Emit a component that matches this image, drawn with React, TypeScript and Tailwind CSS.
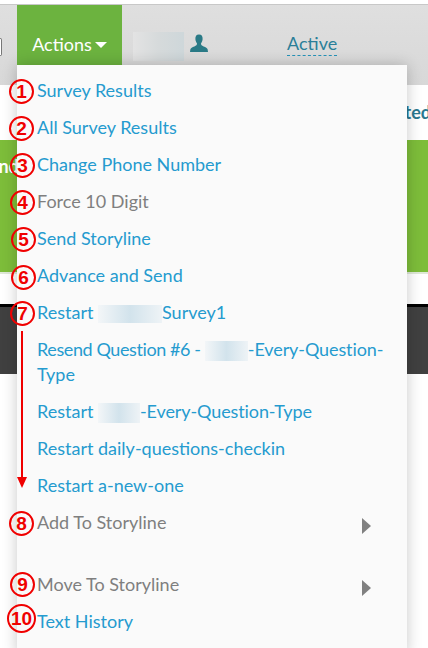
const link = "text-[#259bcf]";
const muted = "text-[#7f7f7f]";

function Blur({ className }: { className: string }) {
  return <span className={`inline-block bg-gradient-to-r from-[#f3f6f8] via-[#d2e3ec] to-[#eef3f6] ${className}`} />;
}

function Caret() {
  return (
    <svg width="9" height="16" viewBox="0 0 9 16" className="fill-[#808080]">
      <path d="M0 0L9 8L0 16Z" />
    </svg>
  );
}

const badges = [
  { n: "1", cls: "left-[9px] top-[79px] w-[25px] h-[25px]" },
  { n: "2", cls: "left-[9px] top-[116px] w-[25px] h-[25px]" },
  { n: "3", cls: "left-[10px] top-[153px] w-[25px] h-[25px]" },
  { n: "4", cls: "left-[10px] top-[190px] w-[25px] h-[25px]" },
  { n: "5", cls: "left-[11px] top-[227px] w-[25px] h-[25px]" },
  { n: "6", cls: "left-[11px] top-[265px] w-[25px] h-[25px]" },
  { n: "7", cls: "left-[10px] top-[301px] w-[25px] h-[25px]" },
  { n: "8", cls: "left-[9px] top-[511px] w-[25px] h-[25px]" },
  { n: "9", cls: "left-[10px] top-[572px] w-[25px] h-[25px]" },
  { n: "10", cls: "left-[7px] top-[604px] w-[29px] h-[29px]" },
];

export default function App() {
  return (
    <div className="relative h-[648px] w-[428px] overflow-hidden bg-white font-['Lato','Open_Sans',sans-serif] text-[18px]">
      <div className="h-1 bg-white" />
      <div className="h-px bg-[#c8c8c8]" />

      {/* top bar */}
      <div className="relative flex h-[80px] items-start bg-gradient-to-b from-[#dfdfdf] to-[#d8d8d8]">
        <div className="mt-[33px] h-[18px] w-[2px] rounded-r-sm border border-l-0 border-[#777] bg-white" />
        <div className="ml-[15px] flex h-[60px] w-[105px] items-center justify-center gap-[3px] bg-[#6cb33f] pt-[18px] text-white">
          <span>Actions</span>
          <span className="mt-[2px] h-0 w-0 border-x-[6px] border-t-[6px] border-x-transparent border-t-white" />
        </div>
        <span className="ml-[11px] mt-[27px] inline-block h-[29px] w-[51px] bg-gradient-to-r from-[#e3e3e3] via-[#d6dadb] to-[#ced7da]" />
        <svg width="18" height="19" viewBox="0 0 19 19" className="ml-[6px] mt-[29px] fill-[#2a7a86]">
          <path d="M9.5 0C12.4 0 13.6 2.2 13.3 5C13.1 7.2 12.2 8.6 11.6 9.6C11.6 11 12.4 11.8 14.4 12.6C16.6 13.5 18.2 14.2 18.6 15.6L19 18.6H0L.4 15.6C.8 14.2 2.4 13.5 4.6 12.6C6.6 11.8 7.4 11 7.4 9.6C6.8 8.6 5.9 7.2 5.7 5C5.4 2.2 6.6 0 9.5 0Z" />
        </svg>
        <span className="ml-[79px] mt-[27px] border-b border-dashed border-[#2592b8] leading-[23px] text-[#2b7f98]">Active</span>
      </div>

      {/* page behind the menu */}
      <div className="flex h-[55px] items-center justify-end overflow-hidden whitespace-nowrap font-bold text-[#2b7890]">
        <span className="-mr-[3px]">Updated</span>
      </div>
      <div className="flex h-[132px] justify-between overflow-hidden bg-[#7dbd3a] pt-[13px] text-white">
        <span className="-ml-[21px] font-bold">Send</span>
      </div>
      <div className="h-[2px] bg-[#dfe8d8]" />
      <div className="h-[30px] bg-white" />
      <div className="h-[3px] bg-black" />
      <div className="h-[67px] bg-[#404040]" />

      {/* actions dropdown */}
      <div className="absolute left-[17px] top-[65px] h-[590px] w-[390px] bg-[#fafafa] pl-5 pr-5 pt-[6.5px] leading-[25px] shadow-[0_0_14px_rgba(0,0,0,0.22)]">
        <div className={`py-[6px] ${link}`}>Survey Results</div>
        <div className={`py-[6px] ${link}`}>All Survey Results</div>
        <div className={`py-[6px] ${link}`}>Change Phone Number</div>
        <div className={`py-[6px] ${muted}`}>Force 10 Digit</div>
        <div className={`py-[6px] ${link}`}>Send Storyline</div>
        <div className={`py-[6px] ${link}`}>Advance and Send</div>
        <div className={`py-[6px] ${link}`}>
          Restart <Blur className="h-[18px] w-[64px] align-[-4px]" />Survey1
        </div>
        <div className={`py-[6px] ${link}`}>
          <span className="tracking-[-0.4px]">Resend Question #6 - </span>
          <Blur className="h-5 w-[43px] align-[-5px]" />
          <span className="tracking-[-0.1px]">-Every-Question-</span>
          <br />
          Type
        </div>
        <div className={`py-[6px] ${link}`}>
          Restart <Blur className="h-5 w-[42px] align-[-5px]" />
          <span className="tracking-[-0.1px]">-Every-Question-Type</span>
        </div>
        <div className={`py-[6px] ${link}`}>Restart daily-questions-checkin</div>
        <div className={`py-[6px] ${link}`}>Restart a-new-one</div>
        <div className={`flex h-[62px] items-start justify-between pr-[16px] pt-[6px] ${muted}`}>
          <span>Add To Storyline</span>
          <span className="mt-[8px]"><Caret /></span>
        </div>
        <div className={`flex items-start justify-between py-[6px] pr-[16px] ${muted}`}>
          <span>Move To Storyline</span>
          <span className="mt-[8px]"><Caret /></span>
        </div>
        <div className={`py-[6px] ${link}`}>Text History</div>
      </div>

      {/* red annotations */}
      {badges.map((b) => (
        <div
          key={b.n}
          className={`absolute flex items-center justify-center rounded-full border-[2.75px] border-[#f00000] font-['Liberation_Sans',sans-serif] text-[19px] font-bold leading-none text-[#f00000] ${b.cls}`}
        >
          {b.n}
        </div>
      ))}
      <svg width="12" height="158" viewBox="0 0 12 158" className="absolute left-[16px] top-[331px] fill-[#f00000]">
        <rect x="5" y="0" width="2" height="148" />
        <path d="M1 146H11L6 157Z" />
      </svg>
    </div>
  );
}
